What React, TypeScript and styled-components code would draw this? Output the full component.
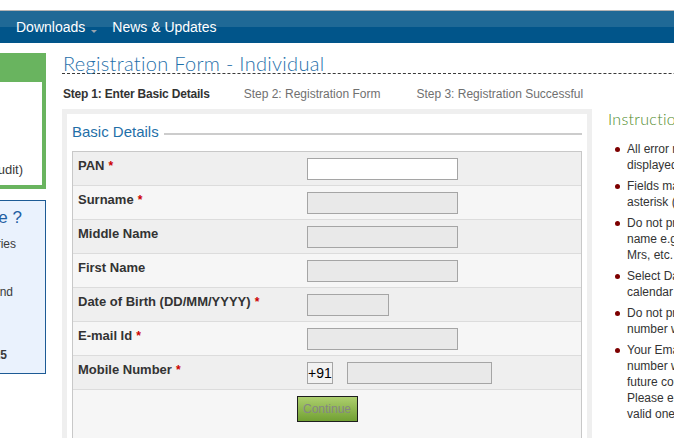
import React from 'react';
import styled, { createGlobalStyle } from 'styled-components';

const Global = createGlobalStyle`
  html, body { margin: 0; padding: 0; background: #fff; overflow: hidden; }
  body { font-family: "Liberation Sans", Arial, sans-serif; color: #333; }
  * { box-sizing: border-box; }
`;

const Page = styled.div`
  width: 674px;
  height: 438px;
  overflow: hidden;
  background: #fff;
`;

const TopStrip = styled.div`
  height: 11px;
  background: #fff;
  border-bottom: 1px solid #b4b4b4;
`;

const NavBar = styled.nav`
  height: 32px;
  background: linear-gradient(#1f6996 0%, #1f6996 50%, #01558a 50%, #01558a 100%);
  display: flex;
  align-items: center;
  padding-left: 16px;
`;

const NavItem = styled.span`
  color: #fff;
  font-size: 14px;
  line-height: 16px;
  white-space: nowrap;
  display: flex;
  align-items: center;
  margin-right: 15px;
`;

const Caret = styled.span`
  width: 0;
  height: 0;
  border-left: 3px solid transparent;
  border-right: 3px solid transparent;
  border-top: 3px solid #9aa4ad;
  margin-left: 6px;
  margin-top: 9px;
`;

const Body = styled.div`
  display: flex;
  gap: 16px;
  padding-top: 10px;
`;

const Sidebar = styled.aside`
  width: 46px;
  flex: none;
  overflow: hidden;
  display: flex;
  flex-direction: column;
`;

const GreenBox = styled.div`
  height: 136px;
  background: #69b45f;
  padding: 29px 4px 4px 0;
  display: flex;
`;

const GreenInner = styled.div`
  flex: 1;
  min-width: 0;
  background: #fff;
  display: flex;
  flex-direction: column;
  justify-content: flex-end;
  align-items: flex-end;
  padding: 0 19px 8px 0;
`;

const SideText = styled.div<{ $mt?: number; $mr?: number; $bold?: boolean }>`
  font-size: 12px;
  line-height: 15px;
  white-space: nowrap;
  color: #3a3a3a;
  font-weight: ${p => (p.$bold ? 'bold' : 'normal')};
  margin-top: ${p => p.$mt ?? 0}px;
  margin-right: ${p => p.$mr ?? 0}px;
`;

const GreenText = styled(SideText)`
  font-size: 13px;
`;

const BlueBox = styled.div`
  margin-top: 11px;
  height: 174px;
  background: #eaf2fd;
  border: 1px solid #1d5b95;
  border-left: none;
  display: flex;
  flex-direction: column;
  align-items: flex-end;
  padding-top: 7px;
`;

const BlueHeading = styled.div`
  font-size: 17px;
  line-height: 20px;
  color: #1f60a2;
  white-space: nowrap;
  margin-right: 23px;
`;

const Content = styled.div`
  flex: none;
  width: 760px;
  display: flex;
  flex-direction: column;
`;

const Title = styled.h1`
  margin: 0;
  padding-left: 1px;
  font-family: Lato, "DejaVu Sans", sans-serif;
  font-weight: 300;
  font-size: 20px;
  line-height: 20px;
  letter-spacing: 0.3px;
  color: #1f70aa;
  border-bottom: 1px dashed #3a3a3a;
  white-space: nowrap;
`;

const Steps = styled.div`
  display: flex;
  padding-left: 1px;
  margin-top: 13px;
  font-size: 12px;
  line-height: 14px;
`;

const Step = styled.span<{ $active?: boolean; $ml?: number }>`
  white-space: nowrap;
  margin-left: ${p => p.$ml ?? 0}px;
  color: ${p => (p.$active ? '#333' : '#707070')};
  font-weight: ${p => (p.$active ? 'bold' : 'normal')};
  letter-spacing: ${p => (p.$active ? '-0.2px' : '0')};
`;

const Columns = styled.div`
  display: flex;
  margin-top: 8px;
`;

const Panel = styled.section`
  width: 530px;
  flex: none;
  border: 5px solid #efefef;
  background: #fff;
  padding: 0 5px;
`;

const LegendRow = styled.div`
  display: flex;
  align-items: flex-start;
  padding-top: 9px;
  margin-bottom: 11px;
`;

const Legend = styled.span`
  font-size: 15px;
  line-height: 17px;
  color: #1f6fa8;
  white-space: nowrap;
`;

const Rule = styled.span`
  flex: 1;
  height: 2px;
  background: #cccccc;
  margin: 10px 0 0 5px;
`;

const Table = styled.div`
  border: 1px solid #c8c8c8;
  border-bottom: none;
`;

const Row = styled.div<{ $alt?: boolean }>`
  display: grid;
  grid-template-columns: 234px 1fr;
  height: 34px;
  border-bottom: 1px solid #dcdcdc;
  background: ${p => (p.$alt ? '#f6f6f6' : '#efefef')};
`;

const Label = styled.div`
  padding: 6px 0 0 5px;
  font-size: 13px;
  line-height: 15px;
  font-weight: bold;
  color: #333;
  white-space: nowrap;
`;

const Req = styled.span`
  color: #c00;
  margin-left: 4px;
  font-size: 12px;
`;

const Cell = styled.div`
  padding-top: 6px;
  display: flex;
  align-items: flex-start;
`;

const Field = styled.input<{ $w: number; $white?: boolean }>`
  width: ${p => p.$w}px;
  height: 22px;
  margin: 0;
  padding: 0 3px;
  border: 1px solid #a5a5a5;
  border-radius: 0;
  background: ${p => (p.$white ? '#fff' : '#e9e9e9')};
  font: 13px "Liberation Sans", Arial, sans-serif;
  outline: none;
`;

const Prefix = styled.span`
  width: 26px;
  height: 22px;
  border: 1px solid #a5a5a5;
  background: #f2f2f2;
  color: #000;
  font-size: 14px;
  line-height: 20px;
  margin-right: 14px;
`;

const ButtonRow = styled.div`
  height: 49px;
  background: #f6f6f6;
  border-bottom: 1px solid #c8c8c8;
  display: flex;
  justify-content: center;
  align-items: flex-start;
  padding-top: 6px;
`;

const Continue = styled.button`
  width: 61px;
  height: 26px;
  margin: 0;
  padding: 0;
  border: 1px solid #1e1e1e;
  border-radius: 0;
  background: linear-gradient(#adcf6e, #71a033);
  color: #858585;
  font: 12px "Liberation Sans", Arial, sans-serif;
`;

const Instructions = styled.aside`
  flex: none;
  width: 200px;
  padding: 0 0 0 16px;
`;

const InstrHeading = styled.h2`
  margin: 0;
  font-family: Lato, "DejaVu Sans", sans-serif;
  font-weight: 300;
  font-size: 16px;
  line-height: 20px;
  letter-spacing: 0.3px;
  color: #4f8b2c;
  white-space: nowrap;
`;

const List = styled.ul`
  list-style: none;
  margin: 12px 0 0;
  padding: 0;
`;

const Item = styled.li`
  display: flex;
  align-items: flex-start;
  margin-bottom: 5px;
  font-size: 12px;
  line-height: 16px;
  color: #333;
`;

const Dot = styled.span`
  flex: none;
  width: 5px;
  height: 5px;
  border-radius: 50%;
  background: #7d0000;
  margin: 6px 7px 0 7px;
`;

const ItemText = styled.span`
  white-space: nowrap;
`;

const fields = [
  { label: 'PAN', req: true, w: 151, white: true },
  { label: 'Surname', req: true, w: 151 },
  { label: 'Middle Name', w: 151 },
  { label: 'First Name', w: 151 },
  { label: 'Date of Birth (DD/MM/YYYY)', req: true, w: 82 },
  { label: 'E-mail Id', req: true, w: 151 },
  { label: 'Mobile Number', req: true, w: 145, mobile: true },
];

const instructions = [
  ['All error messages will be', 'displayed in red'],
  ['Fields marked with an', 'asterisk (*) are mandatory'],
  ['Do not prefix your', 'name e.g. Mr, Ms,', 'Mrs, etc.'],
  ['Select Date of Birth from', 'calendar'],
  ['Do not prefix mobile', 'number with 0 or +91'],
  ['Your Email Id and mobile', 'number will be used for', 'future communication.', 'Please ensure you enter', 'valid ones.'],
];

export default function App() {
  return (
    <Page>
      <Global />
      <TopStrip />
      <NavBar>
        <NavItem>
          Downloads
          <Caret />
        </NavItem>
        <NavItem>News &amp; Updates</NavItem>
      </NavBar>
      <Body>
        <Sidebar>
          <GreenBox>
            <GreenInner>
              <GreenText>Login (Audit)</GreenText>
            </GreenInner>
          </GreenBox>
          <BlueBox>
            <BlueHeading>Need Assistance ?</BlueHeading>
            <SideText $mt={9} $mr={29}>For all queries</SideText>
            <SideText $mt={33} $mr={32}>Monday to Friday and</SideText>
            <SideText $mt={48} $mr={38} $bold>1800 103 0025</SideText>
          </BlueBox>
        </Sidebar>
        <Content>
          <Title>Registration Form - Individual</Title>
          <Steps>
            <Step $active>Step 1: Enter Basic Details</Step>
            <Step $ml={34}>Step 2: Registration Form</Step>
            <Step $ml={36}>Step 3: Registration Successful</Step>
          </Steps>
          <Columns>
            <Panel>
              <LegendRow>
                <Legend>Basic Details</Legend>
                <Rule />
              </LegendRow>
              <Table>
                {fields.map((f, i) => (
                  <Row key={f.label} $alt={i % 2 === 1}>
                    <Label>
                      {f.label}
                      {f.req && <Req>*</Req>}
                    </Label>
                    <Cell>
                      {f.mobile && <Prefix>+91</Prefix>}
                      <Field $w={f.w} $white={f.white} readOnly />
                    </Cell>
                  </Row>
                ))}
                <ButtonRow>
                  <Continue type="button">Continue</Continue>
                </ButtonRow>
              </Table>
            </Panel>
            <Instructions>
              <InstrHeading>Instructions</InstrHeading>
              <List>
                {instructions.map((lines, i) => (
                  <Item key={i}>
                    <Dot />
                    <ItemText>
                      {lines.map((l, j) => (
                        <React.Fragment key={j}>
                          {j > 0 && <br />}
                          {l}
                        </React.Fragment>
                      ))}
                    </ItemText>
                  </Item>
                ))}
              </List>
            </Instructions>
          </Columns>
        </Content>
      </Body>
    </Page>
  );
}
